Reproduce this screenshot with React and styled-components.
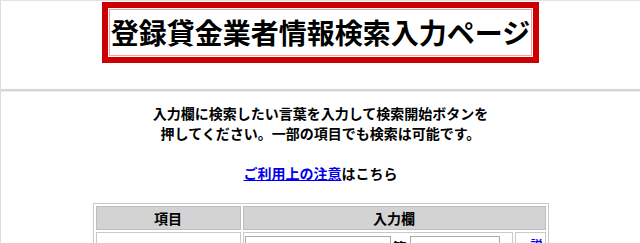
import React from "react";
import styled, { createGlobalStyle } from "styled-components";

const GlobalStyle = createGlobalStyle`
  body {
    margin: 0;
    background: #fff;
    color: #000;
    font-family: "Noto Sans CJK JP", "Noto Sans", sans-serif;
  }
`;

const App = () => {
  return (
    <>
      <GlobalStyle />
      <Page>
        {/* Title banner */}
        <TitleBox>
          <TitleInner>登録貸金業者情報検索入力ページ</TitleInner>
        </TitleBox>

        <Rule />

        <Intro>
          入力欄に検索したい言葉を入力して検索開始ボタンを
          <br />
          押してください。一部の項目でも検索は可能です。
        </Intro>

        <Notice>
          <NoticeLink href="#">ご利用上の注意</NoticeLink>はこちら
        </Notice>

        {/* Search form */}
        <SearchTable>
          <colgroup>
            <col style={{ width: 145 }} />
            <col style={{ width: 270 }} />
            <col style={{ width: 31 }} />
          </colgroup>
          <thead>
            <tr>
              <HeadCell>項目</HeadCell>
              <HeadCell colSpan={2}>入力欄</HeadCell>
            </tr>
          </thead>
          <tbody>
            <tr>
              <LabelCell>登録番号</LabelCell>
              <InputCell>
                <TextInput $width={146} type="text" />
                <Unit>第</Unit>
                <TextInput $width={90} type="text" />
              </InputCell>
              <HelpCell>
                <HelpLink href="#">説明</HelpLink>
              </HelpCell>
            </tr>
          </tbody>
        </SearchTable>
      </Page>
    </>
  );
};

export default App;

/* ---------------- Styled Components ---------------- */
const Page = styled.div`
  min-height: 100vh;
  border-top: 1px solid #e2e2e2;
  border-left: 1px solid #dcdcdc;
  box-sizing: border-box;
  padding-top: 1px;
`;

const TitleBox = styled.div`
  width: fit-content;
  margin: 0 auto;
  border: 6px solid #cc0000;
  padding: 1px;
  background: #fff;
`;

const TitleInner = styled.div`
  border: 1px solid #f2a0a0;
  padding: 0 1px;
  font-size: 28px;
  font-weight: bold;
  line-height: 45px;
  white-space: nowrap;
`;

const Rule = styled.div`
  height: 2px;
  margin-top: 26px;
  background: #d6d6d6;
  border-bottom: 1px solid #ececec;
`;

const Intro = styled.p`
  margin: 11px 0 0;
  text-align: center;
  font-size: 14px;
  font-weight: bold;
  line-height: 20px;
`;

const Notice = styled.p`
  margin: 20px 0 0;
  text-align: center;
  font-size: 14px;
  font-weight: bold;
  line-height: 20px;
`;

const NoticeLink = styled.a`
  color: #0000ee;
  text-decoration: underline;
`;

const SearchTable = styled.table`
  margin: 20px auto 0;
  width: 456px;
  table-layout: fixed;
  border: 1px solid #c9c9c9;
  border-spacing: 2px;
  font-size: 14px;

  th,
  td {
    box-sizing: border-box;
  }
`;

const HeadCell = styled.th`
  height: 24px;
  padding: 0;
  background: #d3d3d3;
  border: 1px solid #bdbdbd;
  font-weight: bold;
  text-align: center;
`;

const LabelCell = styled.td`
  height: 48px;
  border: 1px solid #c9c9c9;
  text-align: center;
  vertical-align: middle;
  font-weight: bold;
`;

const InputCell = styled.td`
  border: 1px solid #c9c9c9;
  padding: 3px 1px;
  vertical-align: top;
  white-space: nowrap;
  font-weight: bold;
`;

const TextInput = styled.input`
  width: ${(p) => p.$width}px;
  height: 20px;
  box-sizing: border-box;
  border: 1px solid #a9a9a9;
  padding: 0 2px;
  vertical-align: top;
  font-size: 13px;
`;

const Unit = styled.span`
  display: inline-block;
  margin: 0 3px 0 2px;
  line-height: 22px;
  vertical-align: top;
`;

const HelpCell = styled.td`
  border: 1px solid #c9c9c9;
  padding: 5px 2px 2px 12px;
  vertical-align: top;
  text-align: right;
  font-size: 12px;
  line-height: 14px;
`;

const HelpLink = styled.a`
  color: #0000ee;
  text-decoration: underline;
  font-weight: bold;
`;
